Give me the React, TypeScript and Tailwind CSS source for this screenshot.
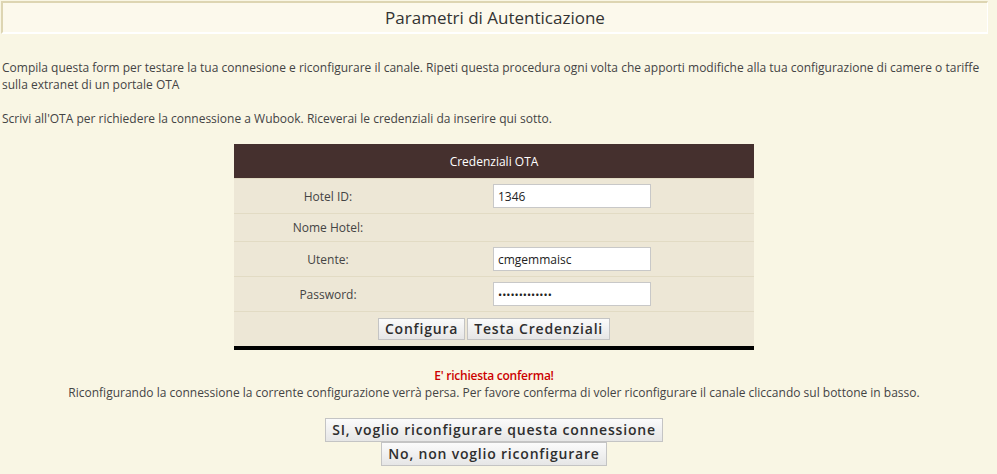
import React from "react";

const rows = [
  { label: "Hotel ID:", value: "1346", type: "text" },
  { label: "Nome Hotel:", value: null, type: "none" },
  { label: "Utente:", value: "cmgemmaisc", type: "text" },
  { label: "Password:", value: "•••••••••••••", type: "password" },
];

function Btn({ children, className = "" }: { children: React.ReactNode; className?: string }) {
  return (
    <button
      type="button"
      className={
        "border border-[#c4c4c4] bg-gradient-to-b from-[#fbfbfb] to-[#e6e6e6] px-[6px] font-semibold text-[#2e2e2e] tracking-[0.8px] " +
        className
      }
    >
      {children}
    </button>
  );
}

export default function App() {
  return (
    <div
      className="min-h-[474px] w-full bg-[#f9f6e4] pt-px text-[12px] leading-[17px] text-[#444]"
      style={{ fontFamily: '"Open Sans", "Noto Sans", sans-serif' }}
    >
      <div className="w-[988px]">
        <div className="ml-px flex h-[33px] items-center justify-center border-t-2 border-l-2 border-r border-b-2 border-t-[#ddd5b2] border-l-[#ddd5b2] border-r-white border-b-white bg-[#fcf9ec] text-[17px] text-[#333]">
          Parametri di Autenticazione
        </div>

        <p className="mt-[25px] px-[2px]">
          Compila questa form per testare la tua connesione e riconfigurare il canale. Ripeti questa procedura ogni volta che apporti modifiche alla tua configurazione di camere o tariffe sulla extranet di un portale OTA
        </p>
        <p className="mt-[17px] px-[2px]">
          Scrivi all'OTA per richiedere la connessione a Wubook. Riceverai le credenziali da inserire qui sotto.
        </p>

        <div className="ml-[234px] mt-[17px] w-[520px] border-b-4 border-black bg-[#ede7d6]">
          <div className="flex h-[34px] items-center justify-center bg-[#45302e] text-[12px] text-white">
            Credenziali OTA
          </div>
          {rows.map((r) => (
            <div
              key={r.label}
              className={
                "grid grid-cols-[188px_1fr] items-center border-t border-[#e2dbc4] " +
                (r.type === "none" ? "h-[28px]" : "h-[35px]")
              }
            >
              <div className="text-center text-[#444]">{r.label}</div>
              <div className="pl-[71px]">
                {r.value !== null && (
                  <div
                    className={
                      "flex h-[24px] w-[158px] items-center border border-[#c8c8c8] bg-white px-[4px] text-[#222] " +
                      (r.type === "password" ? "text-[11px]" : "text-[12px]")
                    }
                  >
                    {r.value}
                  </div>
                )}
              </div>
            </div>
          ))}
          <div className="flex h-[35px] items-center justify-center gap-[2px] border-t border-[#e2dbc4]">
            <Btn className="h-[22px] text-[14px] leading-[20px]">Configura</Btn>
            <Btn className="h-[22px] text-[14px] leading-[20px]">Testa Credenziali</Btn>
          </div>
        </div>

        <div className="mt-[17px] text-center font-semibold tracking-[-0.25px] text-[#cc0000]">E' richiesta conferma!</div>
        <div className="text-center">
          Riconfigurando la connessione la corrente configurazione verrà persa. Per favore conferma di voler riconfigurare il canale cliccando sul bottone in basso.
        </div>

        <div className="mt-[17px] flex flex-col items-center">
          <Btn className="h-[24px] text-[14px] leading-[22px]">SI, voglio riconfigurare questa connessione</Btn>
          <Btn className="h-[24px] text-[14px] leading-[22px]">No, non voglio riconfigurare</Btn>
        </div>
      </div>
    </div>
  );
}
